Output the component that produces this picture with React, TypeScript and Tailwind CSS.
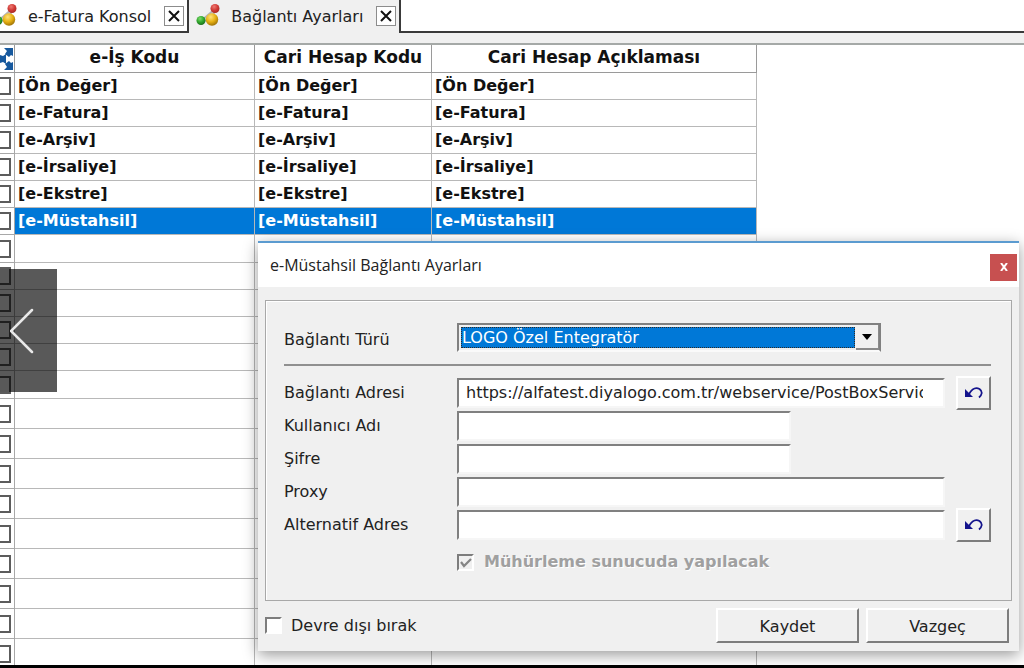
import type { ReactNode } from "react";

const SANS = "font-['DejaVu_Sans',sans-serif]";

type Row = { label: string; height: string; selected?: boolean };

const rows: Row[] = [
  { label: "[Ön Değer]", height: "h-[27px]" },
  { label: "[e-Fatura]", height: "h-[27px]" },
  { label: "[e-Arşiv]", height: "h-[27px]" },
  { label: "[e-İrsaliye]", height: "h-[27px]" },
  { label: "[e-Ekstre]", height: "h-[27px]" },
  { label: "[e-Müstahsil]", height: "h-[27px]", selected: true },
  { label: "", height: "h-[28px]" },
  { label: "", height: "h-[27px]" },
  { label: "", height: "h-[27px]" },
  { label: "", height: "h-[27px]" },
  { label: "", height: "h-[27px]" },
  { label: "", height: "h-[28px]" },
  ...Array.from({ length: 9 }, () => ({ label: "", height: "h-[30px]" })),
];

function BallsIcon() {
  return (
    <svg width="24" height="24" viewBox="0 0 24 24" aria-hidden="true" className="shrink-0">
      <defs>
        <radialGradient id="red" cx="0.4" cy="0.3" r="0.8">
          <stop offset="0" stopColor="#ee7a72" />
          <stop offset="0.5" stopColor="#d03a36" />
          <stop offset="1" stopColor="#9c2420" />
        </radialGradient>
        <radialGradient id="green" cx="0.4" cy="0.3" r="0.8">
          <stop offset="0" stopColor="#7edc6c" />
          <stop offset="0.5" stopColor="#2fa52c" />
          <stop offset="1" stopColor="#176017" />
        </radialGradient>
        <radialGradient id="gold" cx="0.4" cy="0.3" r="0.8">
          <stop offset="0" stopColor="#ffe27a" />
          <stop offset="0.5" stopColor="#e6b012" />
          <stop offset="1" stopColor="#8a6205" />
        </radialGradient>
      </defs>
      <path d="M19 5 L5 17 L16 16 Z" stroke="#b4b4b4" strokeWidth="2" fill="#d8d8d8" />
      <circle cx="19" cy="4.500" r="4.500" fill="url(#red)" />
      <circle cx="5" cy="16.500" r="4.500" fill="url(#green)" />
      <circle cx="16" cy="15.500" r="6.200" fill="url(#gold)" />
    </svg>
  );
}

function CloseTab({ name }: { name: string }) {
  return (
    <button type="button" aria-label={`${name} kapat`} className="flex size-[20px] shrink-0 items-center justify-center border border-[#8c8c8c] bg-white">
      <svg width="12" height="12" viewBox="0 0 12 12" aria-hidden="true">
        <path d="M1 1 L11 11 M11 1 L1 11" stroke="#111" strokeWidth="2" />
      </svg>
    </button>
  );
}

function UndoButton({ label }: { label: string }) {
  return (
    <button type="button" aria-label={label} className="ml-[11px] flex h-[34px] w-[35px] shrink-0 items-center justify-center border-2 border-t-white border-r-[#7d7d7d] border-b-[#7d7d7d] border-l-white bg-[#f0f0f0]">
      <svg width="18" height="14" viewBox="0 0 18 14" aria-hidden="true">
        <path d="M0 3 V11 H8 Z" fill="#14148c" />
        <path d="M4 8 C7 3 11 1 14.500 3 C18 5.500 17 9 14 11.500" fill="none" stroke="#14148c" strokeWidth="1.800" />
      </svg>
    </button>
  );
}

function Field({ id, label, value = "", type = "text", short, children }: { id: string; label: string; value?: string; type?: string; short?: boolean; children?: ReactNode }) {
  return (
    <div className="flex h-[33px] items-center">
      <label htmlFor={id} className="w-[173px] shrink-0">
        {label}
      </label>
      <div className="flex min-w-0 flex-1 items-center">
        <input
          id={id}
          type={type}
          defaultValue={value}
          className={`h-[30px] min-w-0 border-2 border-t-[#808080] border-r-[#f6f6f6] border-b-[#f6f6f6] border-l-[#808080] bg-white pr-5 pl-[7px] outline-none ${short ? "w-[334px]" : "flex-1"}`}
        />
        {children}
      </div>
    </div>
  );
}

function Dialog() {
  return (
    <section role="dialog" aria-labelledby="dialog-title" className="absolute top-[241px] right-[5px] left-[258px] border-t-2 border-[#5b9bd0] bg-[#f0f0f0] shadow-[0_4px_14px_rgba(0,0,0,0.4)]">
      <header className="flex h-[44px] items-center justify-between bg-white pr-[2px] pl-3">
        <h1 id="dialog-title" className="font-['Open_Sans',sans-serif] text-[16px] text-[#222]">
          e-Müstahsil Bağlantı Ayarları
        </h1>
        <button type="button" aria-label="Kapat" className="mt-[4px] flex h-[27px] w-[27px] items-center justify-center bg-[#c75050] text-white">
          <svg width="8" height="8" viewBox="0 0 8 8" aria-hidden="true">
            <path d="M1 0 L7 8 M7 0 L1 8" stroke="#fff" strokeWidth="2" />
          </svg>
        </button>
      </header>
      <form className="px-[7px] pt-[13px] pb-2" onSubmit={(e) => e.preventDefault()}>
        <div className="border border-[#a8a8a8] pt-[22px] pr-5 pb-7 pl-[18px] shadow-[inset_1px_1px_0_#fff]">
          <div className="flex items-center">
            <label htmlFor="type" className="w-[173px] shrink-0 pt-1">
              Bağlantı Türü
            </label>
            <div className="relative h-[29px] w-[424px] border-2 border-t-[#808080] border-r-[#808080] border-b-[#fafafa] border-l-[#808080] bg-[#f0f0f0] p-[2px]">
              <select id="type" className="block h-full w-[394px] appearance-none border border-dotted border-[#2b2b2b] bg-[#0078d7] text-white outline-none">
                <option>LOGO Özel Entegratör</option>
              </select>
              <span className="pointer-events-none absolute top-0 right-0 flex h-full w-[23px] items-center justify-center border-r border-b-2 border-[#8a8a8a] bg-[#f0f0f0]">
                <svg width="10" height="6" viewBox="0 0 10 6" aria-hidden="true">
                  <path d="M0 0 H10 L5 6 Z" fill="#000" />
                </svg>
              </span>
            </div>
          </div>
          <hr className="mt-3 mb-[10px] border-t-2 border-[#909090]" />
          <Field id="address" label="Bağlantı Adresi" value="https://alfatest.diyalogo.com.tr/webservice/PostBoxService">
            <UndoButton label="Bağlantı adresini geri al" />
          </Field>
          <Field id="user" label="Kullanıcı Adı" short />
          <Field id="password" label="Şifre" type="password" short />
          <div className="pr-[46px]">
            <Field id="proxy" label="Proxy" />
          </div>
          <Field id="alternative" label="Alternatif Adres">
            <UndoButton label="Alternatif adresi geri al" />
          </Field>
          <div className="mt-[11px] flex h-[20px] items-center gap-[10px] pl-[173px]">
            <span className="relative flex">
              <input id="seal" type="checkbox" defaultChecked disabled className="size-[17px] appearance-none border-2 border-t-[#7d7d7d] border-r-white border-b-white border-l-[#7d7d7d]" />
              <svg width="17" height="17" viewBox="0 0 17 17" aria-hidden="true" className="pointer-events-none absolute inset-0">
                <path d="M4 8 L7 12 L14 5" fill="none" stroke="#858585" strokeWidth="2.200" />
              </svg>
            </span>
            <label htmlFor="seal" className="font-bold text-[#a0a0a0] [text-shadow:1px_1px_0_#fff]">
              Mühürleme sunucuda yapılacak
            </label>
          </div>
        </div>
        <div className="flex items-center pt-[7px] pr-[3px]">
          <label className="flex flex-1 items-center gap-[9px]">
            <input type="checkbox" className="size-[17px] appearance-none border-2 border-t-[#7d7d7d] border-r-white border-b-white border-l-[#7d7d7d] bg-white" />
            Devre dışı bırak
          </label>
          <div className="flex gap-[7px]">
            {["Kaydet", "Vazgeç"].map((name) => (
              <button key={name} type="button" className="h-[35px] w-[143px] border-2 border-t-white border-r-[#7d7d7d] border-b-[#7d7d7d] border-l-white bg-[#f0f0f0] pt-[3px]">
                {name}
              </button>
            ))}
          </div>
        </div>
      </form>
    </section>
  );
}

export default function App() {
  return (
    <main className={`relative flex h-screen flex-col overflow-hidden bg-white text-[16px] leading-5 text-[#222] ${SANS}`}>
      <nav className="flex h-[33px] shrink-0">
        <div className="flex items-center border-r-2 border-b-2 border-[#3a3a3a] bg-white">
          <span className="-ml-[7px] flex">
            <BallsIcon />
          </span>
          <a href="#konsol" className="mr-[13px] ml-[11px] pt-[2px]">
            e-Fatura Konsol
          </a>
          <CloseTab name="e-Fatura Konsol" />
          <span className="w-[3px]" />
        </div>
        <div className="flex items-center border-r-2 border-[#3a3a3a] bg-[#f0f0f0] pr-[3px] pb-[2px] pl-[7px]">
          <BallsIcon />
          <a href="#ayarlar" className="mr-[13px] ml-[11px] pt-[2px]">
            Bağlantı Ayarları
          </a>
          <CloseTab name="Bağlantı Ayarları" />
        </div>
        <div className="flex-1 border-b-2 border-[#3a3a3a]" />
      </nav>
      <div className="h-[10px] shrink-0 bg-[#f0f0f0]" />
      <div className="min-h-0 flex-1 overflow-hidden border-t-2 border-[#a5a9a7]">
        <table className="w-[757px] table-fixed border-separate border-spacing-0 text-left font-bold text-[#111]">
          <colgroup>
            <col className="w-[15px]" />
            <col className="w-[240px]" />
            <col className="w-[177px]" />
            <col className="w-[325px]" />
          </colgroup>
          <thead>
            <tr className="h-[28px] text-[17px]">
              <th className="border-r border-b border-[#9a9a9a] p-0">
                <svg width="13" height="24" viewBox="0 0 13 24" aria-label="Tümünü seç" className="block">
                  <path d="M4 1 H13 V9 L11 8 L9 10 L5 7 L7 4 Z M4 23 H13 V15 L11 16 L9 14 L5 17 L7 20 Z M0 8 L3 9 L6 7 V17 L3 15 L0 16 Z" fill="#17599e" />
                </svg>
              </th>
              {["e-İş Kodu", "Cari Hesap Kodu", "Cari Hesap Açıklaması"].map((h) => (
                <th key={h} className="border-r border-b border-[#9a9a9a] px-0 pt-0 pb-[4px] text-center whitespace-nowrap">
                  {h}
                </th>
              ))}
            </tr>
          </thead>
          <tbody>
            {rows.map((row, i) => (
              <tr key={i} className={row.height}>
                <td className="overflow-hidden border-r border-b border-[#a8a8a8] p-0">
                  <input type="checkbox" aria-label={`Satır ${i + 1}`} className="-ml-[7px] block size-[18px] appearance-none border-2 border-[#5c5c5c] bg-white" />
                </td>
                {[0, 1, 2].map((c) => (
                  <td key={c} className={`border-r border-b border-[#b8b8b8] py-0 pr-0 pl-[3px] ${row.selected ? "bg-[#0078d7] text-white" : ""}`}>
                    {row.label}
                  </td>
                ))}
              </tr>
            ))}
          </tbody>
        </table>
      </div>
      <div className="h-[3px] shrink-0 bg-black" />
      <Dialog />
      <button type="button" aria-label="Önceki" className="absolute top-[269px] left-0 flex h-[123px] w-[57px] items-center bg-black/65 pl-[10px]">
        <svg width="24" height="46" viewBox="0 0 24 46" aria-hidden="true">
          <path d="M22 2 L1 23 L22 44" fill="none" stroke="#e8e8e8" strokeWidth="2.500" strokeLinecap="round" />
        </svg>
      </button>
    </main>
  );
}
